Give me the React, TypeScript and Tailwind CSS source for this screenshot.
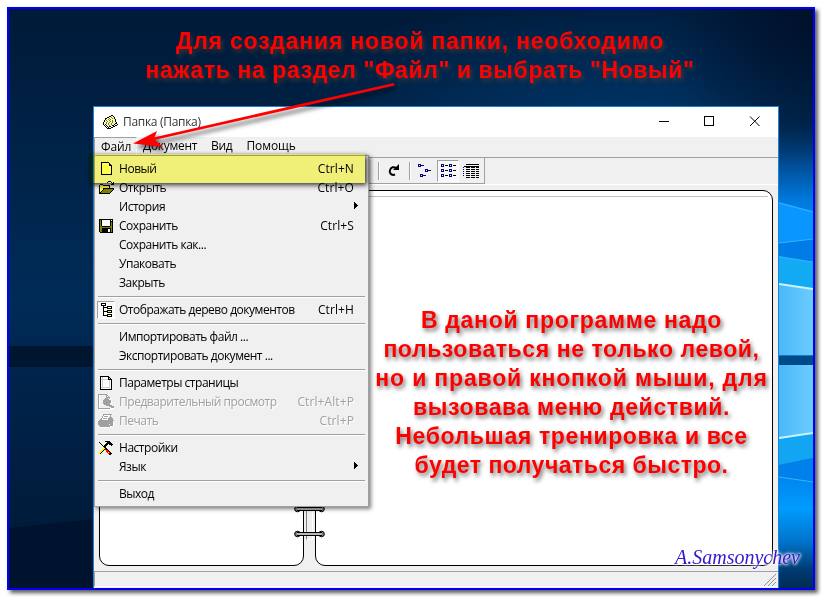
import clsx from "clsx";
import type { ReactNode } from "react";

const palette: Record<string, string> = {
    "#": "#000000",
    w: "#ffffff",
    g: "#a0a0a0",
    d: "#707070",
    s: "#d0d0d0",
    o: "#808000",
    y: "#ffff00",
    l: "#ffff99",
    r: "#ff0000",
    n: "#000080",
};

// small bitmap icons, one character per pixel
function Sprite({ rows, className }: { rows: string[]; className?: string }) {
    const w = Math.max(...rows.map((r) => r.length));
    return <svg width={w} height={rows.length} viewBox={`0 0 ${w} ${rows.length}`} shapeRendering="crispEdges" className={clsx("shrink-0", className)}>
        {rows.flatMap((row, y) => row.split("").map((c, x) =>
            palette[c] ? <rect key={`${x}-${y}`} x={x} y={y} width="1" height="1" fill={palette[c]} /> : null
        ))}
    </svg>
}

const folder = [
    "........##.....",
    "......##ll#....",
    "....##lldll#...",
    "..##lldlldl#...",
    "..#lldldllll#..",
    ".#ldlldlldll#..",
    ".#lldlldldll#..",
    "#lldlldlldlll#.",
    "#lldldlldlll##.",
    "#.#lldlldll#..#",
    ".#.#lldll##.##.",
    "..#.#l##..##...",
    "...#.#..##.....",
    "....####.......",
];

const fresh = [
    "########...",
    "#lllllll#..",
    "#lllllll##.",
    "#lllllll###",
    "#lllllllll#",
    "#lllllllll#",
    "#lllllllll#",
    "#lllllllll#",
    "#lllllllll#",
    "#lllllllll#",
    "#lllllllll#",
    "#lllllllll#",
    "###########",
];

const open = [
    ".........###...",
    "........#...#.#",
    ".............##",
    ".###........###",
    "#lyl#######....",
    "#ylylylyly#....",
    "#lylylylyl#....",
    "#yly###########",
    "#lyl#ooooooooo#",
    "#yl#ooooooooo#.",
    "#l#ooooooooo#..",
    "##ooooooooo#...",
    "###########....",
];

const save = [
    "##############",
    "#o#wwwwwwww#w#",
    "#o#wwwwwwww###",
    "#o#wwwwwwww#o#",
    "#o#wwwwwwww#o#",
    "#o#wwwwwwww#o#",
    "#o#wwwwwwww#o#",
    "#oo########oo#",
    "#oooooooooooo#",
    "#oo#########o#",
    "#oo######ww#o#",
    "#oo######ww#o#",
    "#oo######ww#o#",
    ".#############",
];

const tree = [
    "#####......",
    "#www#......",
    "#####......",
    "..#...#####",
    "..#####www#",
    "..#...#####",
    "..#........",
    "..#...#####",
    "..#####yyy#",
    "..#...#####",
    "..#........",
    "..#...#####",
    "..#####www#",
    "......#####",
];

const page = [
    "#########...",
    "#wswwwww##..",
    "#wswwwww#s#.",
    "#sssssss####",
    "#wswwwwwwsw#",
    "#wswwwwwwsw#",
    "#wswwwwwwsw#",
    "#wswwwwwwsw#",
    "#wswwwwwwsw#",
    "#wswwwwwwsw#",
    "#wswwwwwwsw#",
    "#sssssssssw#",
    "#wswwwwwwsw#",
    "############",
];

const preview = [
    "ggggggggg.......",
    "gw......gg......",
    "gw......gwg.....",
    "gw......gggg....",
    "gw.....ggg.gw...",
    "gw....gggggww...",
    "gw...ggggggggw..",
    "gw...ggggggggw..",
    "gw...ggggggggw..",
    "gw...gggggggww..",
    "gw....gggggg....",
    "gw......gggggg..",
    "gw........wggggg",
    "gw..........wggg",
    "ggggggggggggwwww",
    ".wwwwwwwwwwwww..",
];

const print = [
    ".....ggggggggg..",
    ".....gwwwwwwgw..",
    "....gwggggwwg...",
    "....gwwwwwwggg..",
    "...gwggggwggggg.",
    "..ggwwwwwwggggg.",
    ".ggggggggggggggg",
    "gggggggggggggggw",
    "gggggggggggggggw",
    "gggggggggggggggw",
    "gggggggggggwgggw",
    ".ggggggggggggggw",
    "..ggggggggggwww.",
    "...wwwwwwwwww...",
];

const tools = [
    "......#####...",
    "#.......####..",
    ".#.....######.",
    "..#...###.####",
    "...#.###....#.",
    "....###.......",
    "....y##y......",
    "....yy##......",
    "...yy#r##.....",
    "..yy#.yrr#....",
    ".yy#...rrr#...",
    "yy#.....ryr#..",
    "y#.......rr##.",
    "..........##..",
];

const smallIcons = [
    "nnn...........",
    "n.nnnn........",
    "nnn...........",
    "..............",
    "..............",
    ".......nnn....",
    ".......n.nnnn.",
    ".......nnn....",
    "..............",
    "..............",
    "..nnn.........",
    "..n.nnnn......",
    "..nnn.........",
];

const listIcons = [
    "nnn.....nnn....",
    "n.n.###.n.n.###",
    "nnn.....nnn....",
    "...............",
    "...............",
    "nnn.....nnn....",
    "n.n.###.n.n.###",
    "nnn.....nnn....",
    "...............",
    "...............",
    "nnn.....nnn....",
    "n.n.###.n.n.###",
    "nnn.....nnn....",
];

const details = [
    "...#############",
    "................",
    ".###############",
    "n..####.####.###",
    "................",
    "n..####.####.###",
    "................",
    "n..####.####.###",
    "................",
    "n..####.####.###",
    "................",
    "n..####.####.###",
    "................",
    "...####.####.###",
];

const arrowRight = ["#....", "##...", "###..", "####.", "###..", "##...", "#...."];

function Item({ label, keys, icon, disabled, sub, inset }: { label: string; keys?: string; icon?: string[]; disabled?: boolean; sub?: boolean; inset?: boolean }) {
    return <div className={clsx("flex h-[19px] items-center pr-[12px]", disabled && "text-[#a0a0a0] [text-shadow:1px_1px_0_#fff]")}>
        <div className={clsx("flex h-[18px] w-[18px] shrink-0 items-center justify-center", inset && "border border-[#a0a0a0] border-r-white border-b-white bg-[#f8f8f8]")}>
            {icon && <Sprite rows={icon} />}
        </div>
        <span className="ml-[4px] grow">{label}</span>
        {keys && <span className="tracking-[0.1px]">{keys}</span>}
        {sub && <Sprite rows={arrowRight} className="-mr-[5px] mb-[2px]" />}
    </div>
}

function Divider() {
    return <div className="h-2 px-[1px] pt-[4px]"><div className="h-[2px] w-full border-b border-white bg-[#a0a0a0]"></div></div>
}

function FileMenu() {
    return <div className="absolute left-0 top-[48px] h-[352px] w-[275px] border border-[#a0a0a0] bg-[#f0f0f0] pl-[2px] pr-[2px] pt-[3px] tracking-[-0.47px] shadow-[2px_2px_4px_rgba(0,0,0,0.5)]">
        <Item label="Новый" keys="Ctrl+N" icon={fresh} />
        <Item label="Открыть" keys="Ctrl+O" icon={open} />
        <Item label="История" sub />
        <Item label="Сохранить" keys="Ctrl+S" icon={save} />
        <Item label="Сохранить как..." />
        <Item label="Упаковать" />
        <Item label="Закрыть" />
        <Divider />
        <Item label="Отображать дерево документов" keys="Ctrl+H" icon={tree} inset />
        <Divider />
        <Item label="Импортировать файл ..." />
        <Item label="Экспортировать документ ..." />
        <Divider />
        <Item label="Параметры страницы" icon={page} />
        <Item label="Предварительный просмотр" keys="Ctrl+Alt+P" icon={preview} disabled />
        <Item label="Печать" keys="Ctrl+P" icon={print} disabled />
        <Divider />
        <Item label="Настройки" icon={tools} />
        <Item label="Язык" sub />
        <Divider />
        <Item label="Выход" />
    </div>
}

function Ring() {
    return <svg width="32" height="8" viewBox="0 0 32 8" className="shrink-0">
        <circle cx="3.5" cy="4" r="2.8" fill="#808080" stroke="#000" />
        <circle cx="27.5" cy="4" r="2.8" fill="#808080" stroke="#000" />
        <path d="M3 2.500H28M3 5.500H28" stroke="#000" shapeRendering="crispEdges" />
        <path d="M3 4H28" stroke="#b8b8b8" strokeWidth="2" shapeRendering="crispEdges" />
    </svg>
}

function Wallpaper() {
    return <svg width="804" height="579" viewBox="9 9 804 579" className="absolute left-0 top-0">
        <defs>
            <linearGradient id="base" x1="0" y1="0" x2="0" y2="1">
                <stop offset="0" stopColor="#001a38" />
                <stop offset="0.25" stopColor="#002348" />
                <stop offset="0.5" stopColor="#002b57" />
                <stop offset="0.65" stopColor="#00234a" />
                <stop offset="1" stopColor="#001834" />
            </linearGradient>
            <radialGradient id="glow" gradientUnits="userSpaceOnUse" cx="620" cy="130" r="330" gradientTransform="matrix(1 0 0 .45 0 72)">
                <stop offset="0" stopColor="#003a70" stopOpacity="0.8" />
                <stop offset="1" stopColor="#003a70" stopOpacity="0" />
            </radialGradient>
            <radialGradient id="corner" gradientUnits="userSpaceOnUse" cx="813" cy="20" r="150">
                <stop offset="0" stopColor="#00112b" />
                <stop offset="1" stopColor="#00112b" stopOpacity="0" />
            </radialGradient>
            <linearGradient id="beam" gradientUnits="userSpaceOnUse" x1="0" y1="120" x2="0" y2="588">
                <stop offset="0" stopColor="#00305f" stopOpacity="0" />
                <stop offset="0.09" stopColor="#004a90" />
                <stop offset="0.17" stopColor="#0078dc" />
                <stop offset="0.25" stopColor="#0090f8" />
                <stop offset="0.76" stopColor="#0084ec" />
                <stop offset="0.83" stopColor="#009cff" />
                <stop offset="0.9" stopColor="#0074cc" />
                <stop offset="0.96" stopColor="#003c74" />
                <stop offset="1" stopColor="#002a52" />
            </linearGradient>
            <linearGradient id="pane" x1="0" y1="0" x2="1" y2="0">
                <stop offset="0" stopColor="#4ab8f8" />
                <stop offset="1" stopColor="#6cccff" />
            </linearGradient>
        </defs>
        <rect x="9" y="9" width="804" height="579" fill="url(#base)" />
        <rect x="9" y="9" width="804" height="579" fill="url(#glow)" />
        <rect x="600" y="9" width="213" height="160" fill="url(#corner)" />
        <rect x="9" y="346" width="85" height="21" fill="#001530" />
        <path d="M9 528L94 519V588H9Z" fill="#00132e" />
        <rect x="779" y="120" width="34" height="468" fill="url(#beam)" />
        <path d="M779 202L813 211V239L779 243Z" fill="#0a96ff" />
        <path d="M779 243L813 239V262L779 256Z" fill="#007ce6" />
        <path d="M779 256L813 262V289L779 283Z" fill="#12aaf2" />
        <path d="M779 283L813 289V355.500H779Z" fill="url(#pane)" />
        <path d="M779 365H813V433L779 438Z" fill="url(#pane)" />
        <path d="M779 438L813 433V458L779 465Z" fill="#12a6f2" />
        <path d="M779 465L813 458V482L779 477Z" fill="#0080ea" />
        <path d="M779 203L813 212M779 243L813 239M779 257L813 262M779 477L813 482" stroke="#30b4ff" />
        <path d="M779 284L813 289M779 438L813 433" stroke="#c8f4f8" strokeWidth="2" />
        <rect x="779" y="355.500" width="34" height="9.500" fill="#004a8a" />
    </svg>
}

function AppWindow() {
    return <div className="relative ml-[84px] mt-[97px] flex h-[482px] w-[686px] flex-col border border-b-0 border-[#1883d7] bg-[#f0f0f0] font-['Open_Sans','Noto_Sans',sans-serif] text-[12px] leading-[19px] tracking-[-0.3px] text-black">
        <div className="flex h-[30px] items-center bg-white pl-[9px] pr-[18px]">
            <Sprite rows={folder} />
            <span className="mb-px ml-[5px] grow text-[#333]">Папка (Папка)</span>
            <svg width="101" height="11" viewBox="0 0 101 11" fill="none" stroke="#000" className="mb-[2px]">
                <path d="M0 5.500H10M45.500 .5h9v9h-9z" shapeRendering="crispEdges" />
                <path d="M91 .5l9.500 9.500M100.500 .5L91 10" />
            </svg>
        </div>
        <div className="flex h-5 items-start leading-[18px]">
            <span className="h-full w-[43px] border border-b-0 border-[#a0a0a0] border-r-white pl-[6px] tracking-[-0.1px]">Файл</span>
            <span className="ml-[6px]">Документ</span>
            <span className="ml-[14px]">Вид</span>
            <span className="ml-[14px] tracking-[-0.1px]">Помощь</span>
        </div>
        <div className="flex h-[28px] border-b border-t border-b-white border-t-[#a0a0a0]">
            <div className="flex h-[26px] w-[391px] items-center justify-end border-b border-r border-[#a0a0a0]">
                <div className="h-[18px] w-[2px] border-r border-white bg-[#a0a0a0]"></div>
                <svg width="12" height="13" viewBox="0 0 12 13" className="ml-[8px] mr-px">
                    <path d="M7 10.500C3 12 1 8.500 2 6C3 3 6 2.500 8 4" fill="none" stroke="#000" strokeWidth="2" />
                    <path d="M11 0V6H5Z" />
                </svg>
                <div className="ml-[8px] h-[18px] w-[2px] border-r border-white bg-[#a0a0a0]"></div>
                <Sprite rows={smallIcons} className="ml-[7px]" />
                <div className="ml-[5px] flex h-[22px] w-[22px] items-center justify-center border border-[#a0a0a0] border-b-white border-r-white bg-[#f8f8f8]">
                    <Sprite rows={listIcons} />
                </div>
                <Sprite rows={details} className="ml-[4px] mr-[5px]" />
            </div>
        </div>
        <div className="relative flex h-[386px] gap-[11px] pl-[5px] pr-[5px] pt-[5px]">
            <div className="h-[376px] w-[205px] rounded-[10px] border border-black bg-white"></div>
            <div className="h-[376px] grow rounded-[10px] border border-black bg-white px-[4px] pt-[5px]">
                <div className="h-px bg-[#c0c0c0]"></div>
            </div>
            <div className="absolute left-[212px] top-[5px] h-[350px] w-[7px] border-b border-l border-r border-b-white border-l-[#808080] border-r-white"></div>
            <div className="absolute left-[200px] top-[320px] flex flex-col gap-[17px]">
                <Ring />
                <Ring />
            </div>
        </div>
        <div className="flex h-[16px] items-end justify-end border-b border-l border-t border-[#a0a0a0] border-b-white pr-[2px]">
            <svg width="12" height="12" viewBox="0 0 12 12" stroke="#909090">
                <path d="M0 12L12 0M4 12L12 4M8 12L12 8" />
            </svg>
        </div>
        <FileMenu />
    </div>
}

function Caption({ children, className }: { children: ReactNode; className: string }) {
    return <div className={clsx("absolute flex flex-col items-center whitespace-nowrap font-['Liberation_Sans',Arial,sans-serif] text-[23px] font-bold leading-[29px] text-[#ff0000]", className)}>{children}</div>
}

export default function App() {
    return <div className="h-[597px] w-[822px] overflow-hidden bg-white pl-[7px] pt-[7px]">
        <div className="relative h-[583px] w-[808px] border-2 border-[#0000ff] shadow-[3px_3px_4px_rgba(0,0,0,0.65)]">
            <Wallpaper />
            <AppWindow />
            <div className="absolute left-[80px] top-[145px] h-[29px] w-[276px] bg-[#ffff80] mix-blend-multiply shadow-[2px_2px_5px_rgba(0,0,0,0.8)]"></div>
            <Caption className="left-[110px] top-[18px] w-[602px] [text-shadow:2px_3px_4px_rgba(90,70,50,0.6)]">
                <span className="tracking-[0.8px]">Для создания новой папки, необходимо</span>
                <span className="tracking-[0.59px]">нажать на раздел "Файл" и выбрать "Новый"</span>
            </Caption>
            <Caption className="left-[312px] top-[297px] w-[501px] [text-shadow:2px_3px_4px_rgba(0,0,0,0.55)]">
                <span className="tracking-[0.7px]">В даной программе надо</span>
                <span className="tracking-[0.59px]">пользоваться не только левой,</span>
                <span className="tracking-[0.82px]">но и правой кнопкой мыши, для</span>
                <span className="tracking-[0.64px]">вызовава меню действий.</span>
                <span className="tracking-[0.63px]">Небольшая тренировка и все</span>
                <span className="tracking-[0.5px]">будет получаться быстро.</span>
            </Caption>
            <svg width="280" height="80" viewBox="125 75 280 80" className="absolute left-[116px] top-[66px] drop-shadow-[3px_4px_2px_rgba(0,0,0,0.6)]">
                <path d="M393 84.500L155 138.500" stroke="#ff0000" strokeWidth="2.800" strokeLinecap="round" />
                <path d="M133 143.500L157 131L154 139L163 147Z" fill="#ff0000" />
            </svg>
            <span className="absolute left-[666px] top-[536px] whitespace-nowrap font-['Liberation_Serif',serif] text-[20px] italic leading-[24px] text-[#3a14d0] [text-shadow:0_0_3px_#fff,0_0_3px_#fff,0_0_4px_#fff]">A.Samsonychev</span>
        </div>
    </div>
}
